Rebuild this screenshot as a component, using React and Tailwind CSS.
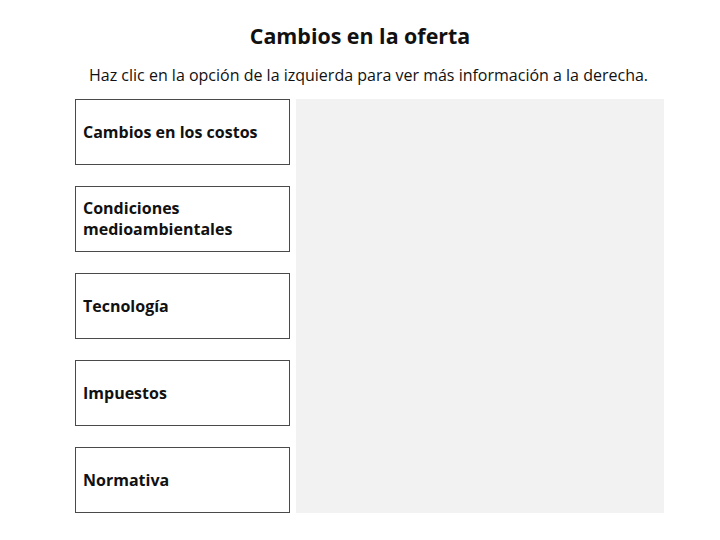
const items = [
  "Cambios en los costos",
  "Condiciones medioambientales",
  "Tecnología",
  "Impuestos",
  "Normativa",
]

export default function App() {
  return (
    <div
      className="w-[720px] h-[540px] bg-white text-[#111]"
      style={{ fontFamily: "'Open Sans', sans-serif" }}
    >
      <h1 className="pt-[22px] text-center text-[21.4px] font-bold leading-[28px]">
        Cambios en la oferta
      </h1>
      <p className="mt-[14px] pl-[89px] text-[16px] leading-[22px]">
        Haz clic en la opción de la izquierda para ver más información a la derecha.
      </p>
      <div className="mt-[13px] ml-[75px] flex gap-[6px]">
        <div className="flex w-[215px] flex-col gap-[21px]">
          {items.map((item) => (
            <button
              key={item}
              type="button"
              className="flex h-[66px] items-center border border-[#4a4a4a] bg-white px-[7px] text-left text-[16px] font-bold leading-[21px] text-[#111]"
            >
              <span className="max-w-[180px]">{item}</span>
            </button>
          ))}
        </div>
        <div className="h-[414px] w-[368px] bg-[#f2f2f2]" />
      </div>
    </div>
  )
}
